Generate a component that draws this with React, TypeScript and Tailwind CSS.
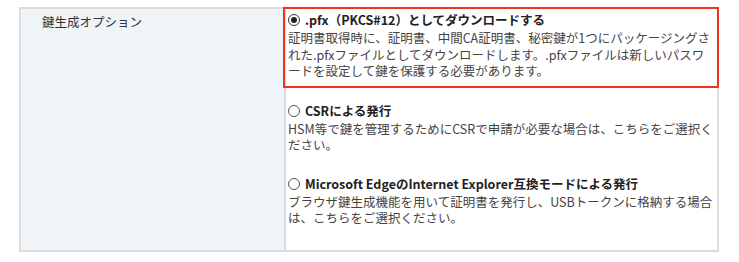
import { useState } from "react";

type Option = {
  id: string;
  title: string;
  description: string;
};

const options: Option[] = [
  {
    id: "pfx",
    title: ".pfx（PKCS#12）としてダウンロードする",
    description:
      "証明書取得時に、証明書、中間CA証明書、秘密鍵が1つにパッケージングされた.pfxファイルとしてダウンロードします。.pfxファイルは新しいパスワードを設定して鍵を保護する必要があります。",
  },
  {
    id: "csr",
    title: "CSRによる発行",
    description:
      "HSM等で鍵を管理するためにCSRで申請が必要な場合は、こちらをご選択ください。",
  },
  {
    id: "ie",
    title: "Microsoft EdgeのInternet Explorer互換モードによる発行",
    description:
      "ブラウザ鍵生成機能を用いて証明書を発行し、USBトークンに格納する場合は、こちらをご選択ください。",
  },
];

function Radio({ checked }: { checked: boolean }) {
  return (
    <span
      className={`inline-flex items-center justify-center w-[12px] h-[12px] rounded-full border shrink-0 bg-white ${
        checked ? "border-[#333]" : "border-[#555]"
      }`}
    >
      {checked && <span className="w-[6px] h-[6px] rounded-full bg-[#222]" />}
    </span>
  );
}

function OptionItem({
  option,
  checked,
  onSelect,
}: {
  option: Option;
  checked: boolean;
  onSelect: () => void;
}) {
  return (
    <label className="block cursor-pointer" onClick={onSelect}>
      <span className="flex items-center gap-[5px] font-bold text-[#222] text-[12.5px] leading-[16px]">
        <Radio checked={checked} />
        {option.title}
      </span>
      <span className="block mt-[2px] text-[#444] text-[12.5px] leading-[16.5px]">
        {option.description}
      </span>
    </label>
  );
}

export default function App() {
  const [selected, setSelected] = useState("pfx");

  return (
    <div
      className="w-[739px] h-[262px] bg-white pt-[7px] pl-[19px]"
      style={{ fontFamily: '"Noto Sans CJK JP", "Noto Sans", sans-serif' }}
    >
      <div className="flex w-[700px] h-[245px] border-2 border-[#dcdcdc]">
        <div className="w-[265px] shrink-0 bg-[#eff4f8] border-r-2 border-[#dcdcdc] pl-[21px] pt-[5px] text-[12.5px] leading-[16px] text-[#333]">
          鍵生成オプション
        </div>
        <div className="flex-1 -mt-[2px] -ml-[3px] -mr-[2px]">
          <div className="border-2 border-[#f0321e] pl-[3px] pr-[4px] pt-[3px] pb-[6px]">
            <OptionItem
              option={options[0]}
              checked={selected === "pfx"}
              onSelect={() => setSelected("pfx")}
            />
          </div>
          <div className="flex flex-col gap-[22px] pl-[5px] pr-[6px] pt-[15px]">
            {options.slice(1).map((o) => (
              <OptionItem
                key={o.id}
                option={o}
                checked={selected === o.id}
                onSelect={() => setSelected(o.id)}
              />
            ))}
          </div>
        </div>
      </div>
    </div>
  );
}
